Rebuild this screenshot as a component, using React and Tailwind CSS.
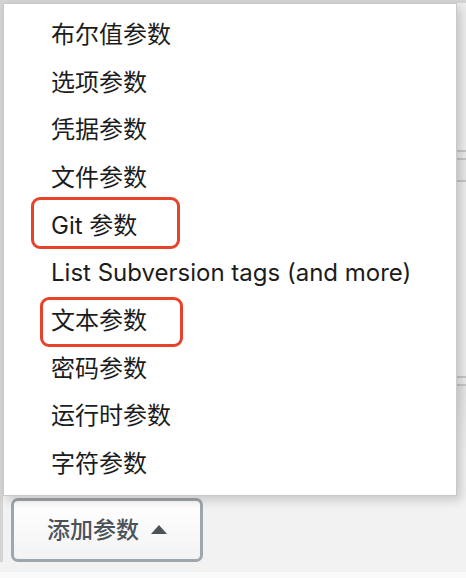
const items = [
  '布尔值参数',
  '选项参数',
  '凭据参数',
  '文件参数',
  'Git 参数',
  'List Subversion tags (and more)',
  '文本参数',
  '密码参数',
  '运行时参数',
  '字符参数',
];

export default function App() {
  return (
    <div
      className="relative w-[466px] h-[578px] overflow-hidden bg-[#f2f2f2]"
      style={{ fontFamily: 'Inter, "Noto Sans CJK SC", sans-serif' }}
    >
      {/* underlying panel */}
      <div className="h-[562px] border-l-[3px] border-t-[3px] border-[#d4d4d4] flex flex-col">
        <div className="h-[147px] bg-[#efefef]" />
        <div className="h-[10px] bg-[#ececec] border-y-2 border-[#c8c8c8]" />
        <div className="h-[22px] bg-[#e9e9e9] border-b-2 border-[#c8c8c8]" />
        <div className="h-[194px] bg-[#efefef]" />
        <div className="h-[10px] bg-[#ececec] border-y-2 border-[#c8c8c8]" />
        <div className="flex-1 bg-gradient-to-b from-[#e6e6e6] to-[#f2f2f2] to-[40%] flex flex-col justify-end pl-[8px]">
          <button className="w-[192px] h-[64px] border-[3px] border-[#9ea7ae] rounded-[7px] bg-gradient-to-b from-white to-[#f3f3f3] flex items-center pl-[33px] gap-[12px] text-[23px] font-medium text-[#4b5259]">
            <span>添加参数</span>
            <span className="w-0 h-0 border-l-[8px] border-r-[8px] border-b-[9px] border-l-transparent border-r-transparent border-b-[#4b5259] mb-[2px]" />
          </button>
        </div>
      </div>
      <div className="h-[10px] bg-[#f2f2f2]" />
      <div className="h-[6px] bg-[#fafafa]" />

      {/* dropdown menu */}
      <div className="absolute top-[3px] left-[3px] w-[454px] h-[493px] bg-white border border-[#c9c9c9] shadow-[4px_4px_10px_rgba(0,0,0,0.18)] pt-[7px]">
        {items.map((t) => (
          <div key={t} className="h-[47.7px] flex items-center pl-[47px] text-[24px] text-[#1c1c1c]">
            {t}
          </div>
        ))}
        <div className="absolute left-[27px] top-[193px] w-[149px] h-[52px] border-[3px] border-[#e6432a] rounded-[9px]" />
        <div className="absolute left-[36px] top-[293px] w-[143px] h-[50px] border-[3px] border-[#e6432a] rounded-[9px]" />
      </div>
    </div>
  );
}
